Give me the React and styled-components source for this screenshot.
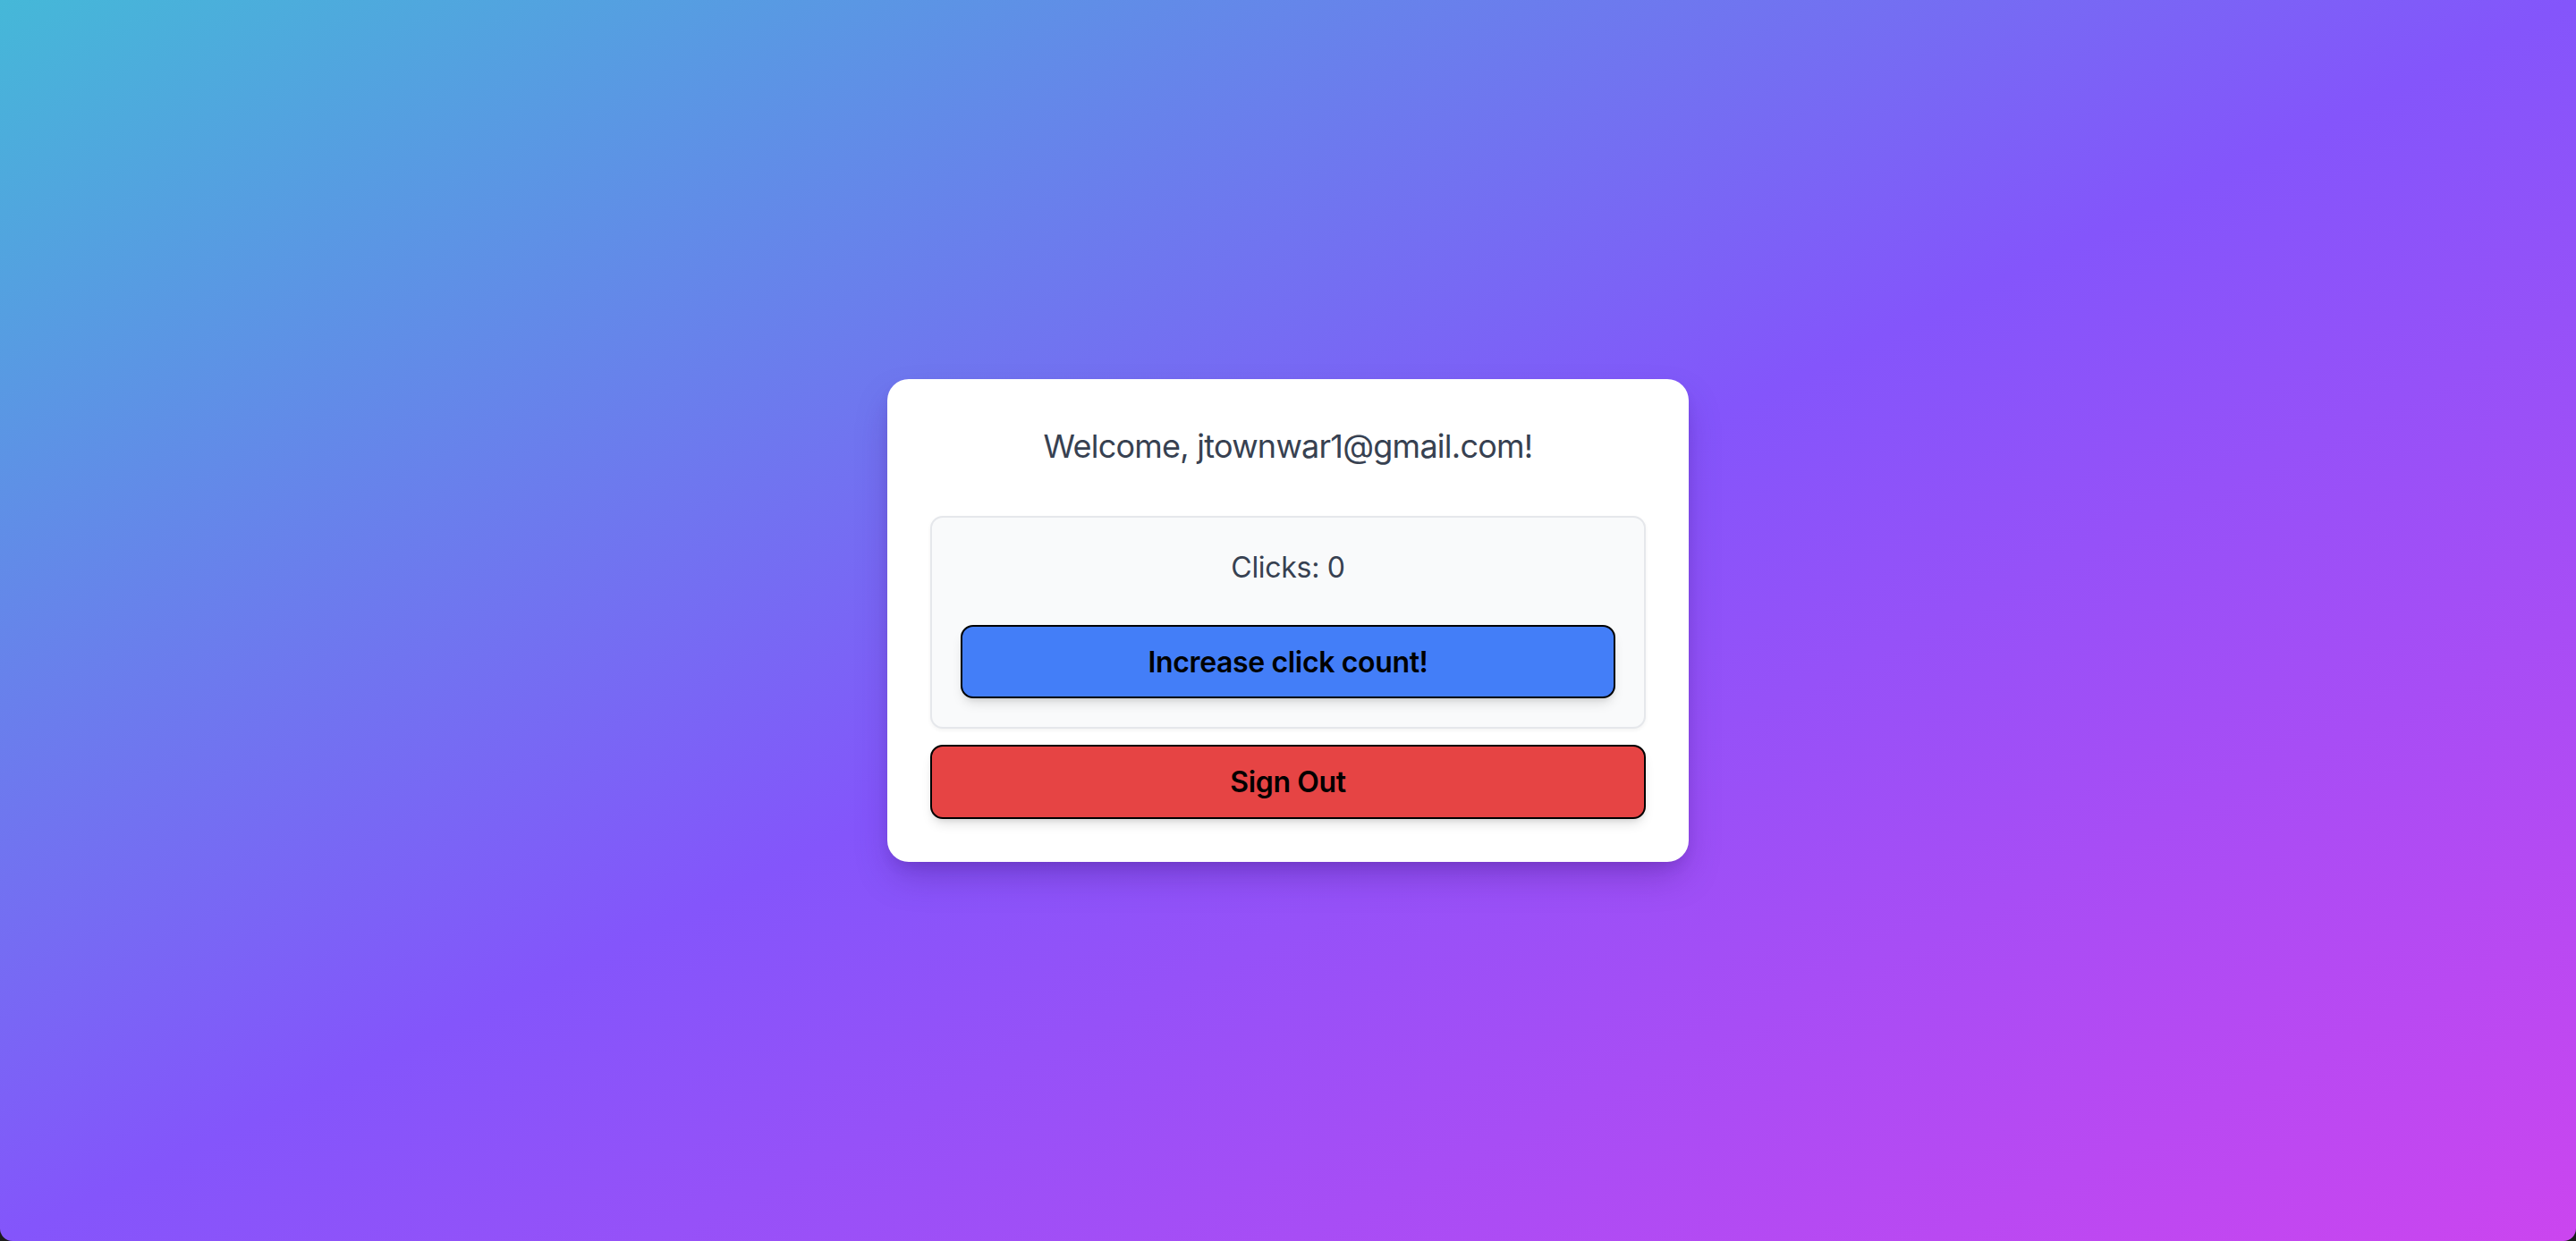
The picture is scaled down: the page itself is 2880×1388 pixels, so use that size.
import React, { useState } from "react";
import styled, { createGlobalStyle } from "styled-components";

const Global = createGlobalStyle`
  html, body { margin: 0; padding: 0; background: #1c1c1e; }
  body { font-family: Inter, "Noto Sans", "Liberation Sans", sans-serif; }
  * { box-sizing: border-box; }
`;

const Page = styled.div`
  height: 1388px;
  width: 2880px;
  display: flex;
  align-items: center;
  justify-content: center;
  background: linear-gradient(to bottom right, #45b8d8 0%, #8455fb 50%, #cb45ef 100%);
  border-bottom-left-radius: 14px;
  border-bottom-right-radius: 14px;
  overflow: hidden;
`;

const Card = styled.div`
  width: 896px;
  background: #ffffff;
  border-radius: 24px;
  padding: 48px;
  box-shadow: 0 20px 40px -8px rgba(60, 20, 120, 0.35), 0 8px 16px -6px rgba(60, 20, 120, 0.2);
  display: flex;
  flex-direction: column;
`;

const Title = styled.h2`
  margin: 0 0 51px;
  font-size: 36px;
  line-height: 54px;
  font-weight: 400;
  letter-spacing: -0.75px;
  color: #374151;
  text-align: center;
`;

const CounterBox = styled.div`
  background: #f9fafb;
  border: 2px solid #e5e7eb;
  border-radius: 14px;
  padding: 32px;
  display: flex;
  flex-direction: column;
  box-shadow: 0 2px 4px rgba(0, 0, 0, 0.05);
`;

const Count = styled.p`
  margin: 0 0 40px;
  font-size: 32px;
  line-height: 48px;
  letter-spacing: -0.3px;
  color: #374151;
  text-align: center;
`;

const Button = styled.button`
  width: 100%;
  height: ${(p) => p.$h || 82}px;
  border: 2px solid #000;
  border-radius: 14px;
  background: ${(p) => p.$bg};
  color: #000;
  font-family: Inter, "Noto Sans", "Liberation Sans", sans-serif;
  font-size: 32px;
  font-weight: 600;
  letter-spacing: -0.35px;
  cursor: pointer;
  box-shadow: 0 8px 14px -4px rgba(0, 0, 0, 0.15), 0 3px 6px -2px rgba(0, 0, 0, 0.08);
`;

const SignOut = styled(Button)`
  margin-top: 18px;
`;

export default function App() {
  const [count, setCount] = useState(0);
  return (
    <>
      <Global />
      <Page>
        <Card>
          <Title>Welcome, jtownwar1@gmail.com!</Title>
          <CounterBox>
            <Count>Clicks: {count}</Count>
            <Button $bg="#437ef8" onClick={() => setCount(count + 1)}>
              Increase click count!
            </Button>
          </CounterBox>
          <SignOut $bg="#e64444" $h={83}>Sign Out</SignOut>
        </Card>
      </Page>
    </>
  );
}
